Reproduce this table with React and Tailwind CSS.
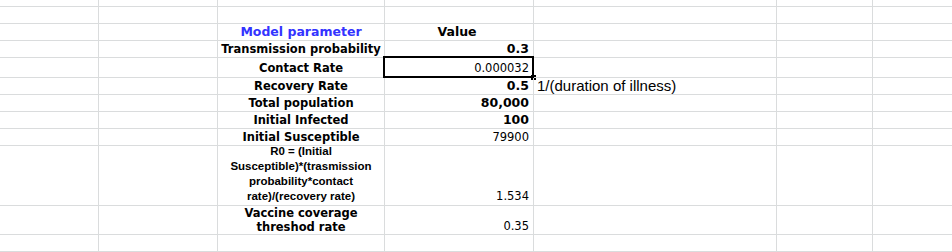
const COLS = "grid-cols-[99px_119px_167px_149px_243px_96px_120px]";

const label = "font-['DejaVu_Sans',sans-serif] font-bold text-[11.5px] text-black";
const valBold = "font-['DejaVu_Sans',sans-serif] font-bold text-[12.5px] text-black";
const valReg = "font-['DejaVu_Sans',sans-serif] text-[11.5px] text-black";

function Cell({ className = "", children }) {
  return (
    <div className={`relative border-r border-b border-[#dadcdd] overflow-visible ${className}`}>
      {children}
    </div>
  );
}

function Row({ a, b, c, align = "items-end" }) {
  return (
    <>
      <Cell />
      <Cell />
      <Cell className={`flex ${align} justify-center text-center`}>{a}</Cell>
      <Cell className={`flex ${align} justify-end pr-1`}>{b}</Cell>
      <Cell className={`flex ${align} pl-[3px]`}>{c}</Cell>
      <Cell />
      <Cell />
    </>
  );
}

export default function App() {
  return (
    <div className="w-[952px] h-[252px] overflow-hidden bg-white">
      <div
        className={`grid ${COLS} grid-rows-[7px_17px_17px_17px_20px_17px_17px_17px_17px_60px_29px_17px_17px] w-[1000px]`}
      >
        <Row />
        <Row />
        <Row
          a={<span className="font-['DejaVu_Sans',sans-serif] font-bold text-[12.5px] text-[#3333ff] leading-[16px]">Model parameter</span>}
          b={<span className="w-full text-center font-['DejaVu_Sans',sans-serif] font-bold text-[12.5px] text-black leading-[16px]">Value</span>}
        />
        <Row
          a={<span className={`${label} leading-[16px]`}>Transmission probability</span>}
          b={<span className={`${valBold} leading-[16px]`}>0.3</span>}
        />
        <Row
          a={<span className={`${label} leading-[17px]`}>Contact Rate</span>}
          b={
            <>
              <span className={`${valReg} leading-[17px]`}>0.000032</span>
              <div className="absolute left-[-2px] top-[-2px] right-[-1px] bottom-[-1px] border-2 border-black pointer-events-none" />
              <div className="absolute right-[-3px] bottom-[-3px] w-[5px] h-[5px] bg-black" />
            </>
          }
        />
        <Row
          a={<span className={`${label} leading-[16px]`}>Recovery Rate</span>}
          b={<span className={`${valBold} leading-[16px]`}>0.5</span>}
          c={<span className="whitespace-nowrap font-['Liberation_Sans',Arial,sans-serif] text-[15px] text-black leading-[17px]">1/(duration of illness)</span>}
        />
        <Row
          a={<span className={`${label} leading-[16px]`}>Total population</span>}
          b={<span className={`${valBold} leading-[16px]`}>80,000</span>}
        />
        <Row
          a={<span className={`${label} leading-[16px]`}>Initial Infected</span>}
          b={<span className={`${valBold} leading-[16px]`}>100</span>}
        />
        <Row
          a={<span className={`${label} leading-[16px]`}>Initial Susceptible</span>}
          b={<span className={`${valReg} leading-[16px]`}>79900</span>}
        />
        <Row
          a={
            <span className="font-['Liberation_Sans',Arial,sans-serif] font-bold text-[11.5px] text-black leading-[15px] pb-[1px]">
              R0 = (Initial
              <br />
              Susceptible)*(trasmission
              <br />
              probability*contact
              <br />
              rate)/(recovery rate)
            </span>
          }
          b={<span className={`${valReg} leading-[16px] pb-[1px]`}>1.534</span>}
        />
        <Row
          a={
            <span className={`${label} leading-[14px]`}>
              Vaccine coverage
              <br />
              threshod rate
            </span>
          }
          b={<span className={`${valReg} leading-[16px]`}>0.35</span>}
        />
        <Row />
        <Row />
      </div>
    </div>
  );
}
